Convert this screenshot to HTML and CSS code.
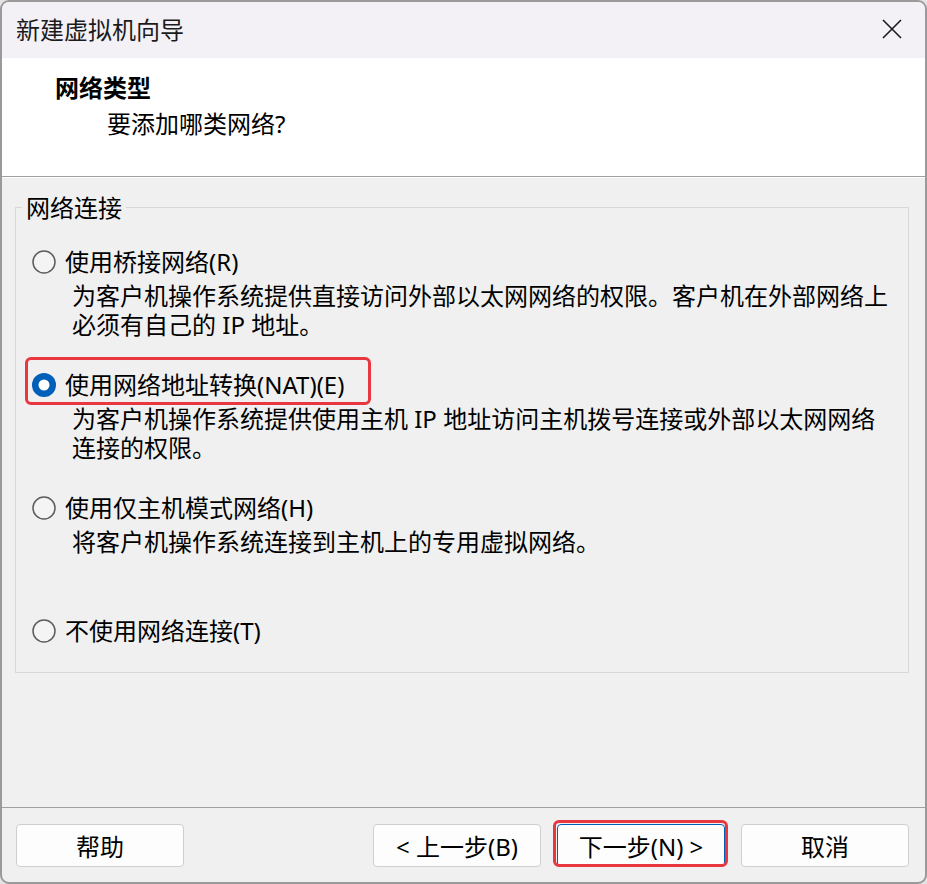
FILE: index.html
```html
<!DOCTYPE html>
<html lang="zh-CN">
<head>
<meta charset="utf-8">
<title>新建虚拟机向导</title>
<link rel="stylesheet" href="styles.css">
</head>
<body>
<div class="window">
  <div class="titlebar">
    <span class="title">新建虚拟机向导</span>
    <svg class="close" viewBox="0 0 20 20" aria-hidden="true"><path d="M1 1 L19 19 M19 1 L1 19" stroke="#1a1a1a" stroke-width="1.6" fill="none"/></svg>
  </div>
  <div class="header">
    <div class="h-title">网络类型</div>
    <div class="h-sub">要添加哪类网络?</div>
  </div>
  <div class="content">
    <div class="group">
      <span class="legend">网络连接</span>
      <div class="option">
        <div class="opt-label">
          <svg class="radio" viewBox="0 0 24 24"><circle cx="12" cy="12" r="11" fill="#f4f4f4" stroke="#5c5c5c" stroke-width="1.5"/></svg>
          <span>使用桥接网络(R)</span>
        </div>
        <div class="desc">为客户机操作系统提供直接访问外部以太网网络的权限。客户机在外部网络上<br>必须有自己的 IP 地址。</div>
      </div>
      <div class="option">
        <span class="mark"></span>
        <div class="opt-label">
          <svg class="radio" viewBox="0 0 24 24"><circle cx="12" cy="12" r="12" fill="#005fb8"/><circle cx="12" cy="12" r="5.5" fill="#ffffff"/></svg>
          <span>使用网络地址转换(NAT)(E)</span>
        </div>
        <div class="desc">为客户机操作系统提供使用主机 IP 地址访问主机拨号连接或外部以太网网络<br>连接的权限。</div>
      </div>
      <div class="option">
        <div class="opt-label">
          <svg class="radio" viewBox="0 0 24 24"><circle cx="12" cy="12" r="11" fill="#f4f4f4" stroke="#5c5c5c" stroke-width="1.5"/></svg>
          <span>使用仅主机模式网络(H)</span>
        </div>
        <div class="desc">将客户机操作系统连接到主机上的专用虚拟网络。</div>
      </div>
      <div class="option">
        <div class="opt-label">
          <svg class="radio" viewBox="0 0 24 24"><circle cx="12" cy="12" r="11" fill="#f4f4f4" stroke="#5c5c5c" stroke-width="1.5"/></svg>
          <span>不使用网络连接(T)</span>
        </div>
      </div>
    </div>
  </div>
  <div class="footer">
    <button class="btn help">帮助</button>
    <button class="btn">&lt; 上一步(B)</button>
    <button class="btn next">下一步(N) &gt;<span class="btn-mark"></span></button>
    <button class="btn">取消</button>
  </div>
</div>
</body>
</html>
```
FILE: styles.css
```css
* { box-sizing: border-box; }

body {
  margin: 0;
  background: #e4e4e4;
  font-family: "Noto Sans", "Noto Sans CJK SC", sans-serif;
  font-size: 24px;
  color: #000;
}

.window {
  width: 927px;
  height: 884px;
  border: 2px solid #9a9a9a;
  border-radius: 9px;
  overflow: hidden;
  display: flex;
  flex-direction: column;
  background: #f0f0f0;
}

.titlebar {
  flex: none;
  height: 56px;
  background: #f3f0f6;
  display: flex;
  align-items: center;
  justify-content: space-between;
  padding: 0 23px 0 14px;
}

.title {
  line-height: 56px;
  color: #1b1b1b;
  white-space: nowrap;
}

.close {
  width: 20px;
  height: 20px;
  margin-top: -3px;
}

.header {
  flex: none;
  height: 119px;
  background: #ffffff;
  border-bottom: 1px solid #a0a0a0;
  padding: 16px 0 0 53px;
}

.h-title {
  line-height: 28px;
  font-weight: 700;
}

.h-sub {
  margin-top: 8px;
  padding-left: 52px;
  line-height: 28px;
}

.content {
  flex: 1;
  padding: 30px 16px 0 13px;
  box-shadow: inset 0 1px 0 #ffffff;
}

.group {
  position: relative;
  border: 1px solid #d8d8d8;
  padding: 40px 0 27px 16px;
}

.legend {
  position: absolute;
  top: -14px;
  left: 6px;
  padding: 0 4px;
  line-height: 28px;
  background: #f0f0f0;
  white-space: nowrap;
}

.option {
  position: relative;
  min-height: 123px;
}

.option:last-child {
  min-height: 0;
}

.opt-label {
  display: flex;
  align-items: center;
  height: 28px;
  line-height: 28px;
  white-space: nowrap;
}

.radio {
  flex: none;
  width: 24px;
  height: 24px;
  margin-right: 9px;
}

.desc {
  margin-top: 6px;
  padding-left: 40px;
  line-height: 28.5px;
  white-space: nowrap;
}

.mark {
  position: absolute;
  left: -7px;
  top: -14px;
  width: 346px;
  height: 48px;
  border: 3px solid #e8373e;
  border-radius: 6px;
}

.footer {
  flex: none;
  height: 75px;
  border-top: 1px solid #a0a0a0;
  display: flex;
  align-items: flex-start;
  padding: 16px 16px 0 14px;
}

.btn {
  width: 168px;
  height: 43px;
  border: 1px solid #cfcfcf;
  border-radius: 4px;
  background: #fdfdfd;
  font: inherit;
  color: #000;
  padding: 3px 0 0;
  line-height: 38px;
  text-align: center;
  white-space: nowrap;
  margin-left: 16px;
}

.help {
  margin-left: 0;
  margin-right: auto;
}

.next {
  position: relative;
  border-color: #005fb8;
}

.btn-mark {
  position: absolute;
  top: -5px;
  left: -5px;
  right: -4px;
  bottom: -1px;
  border: 3px solid #e8373e;
  border-radius: 6px;
}
```
